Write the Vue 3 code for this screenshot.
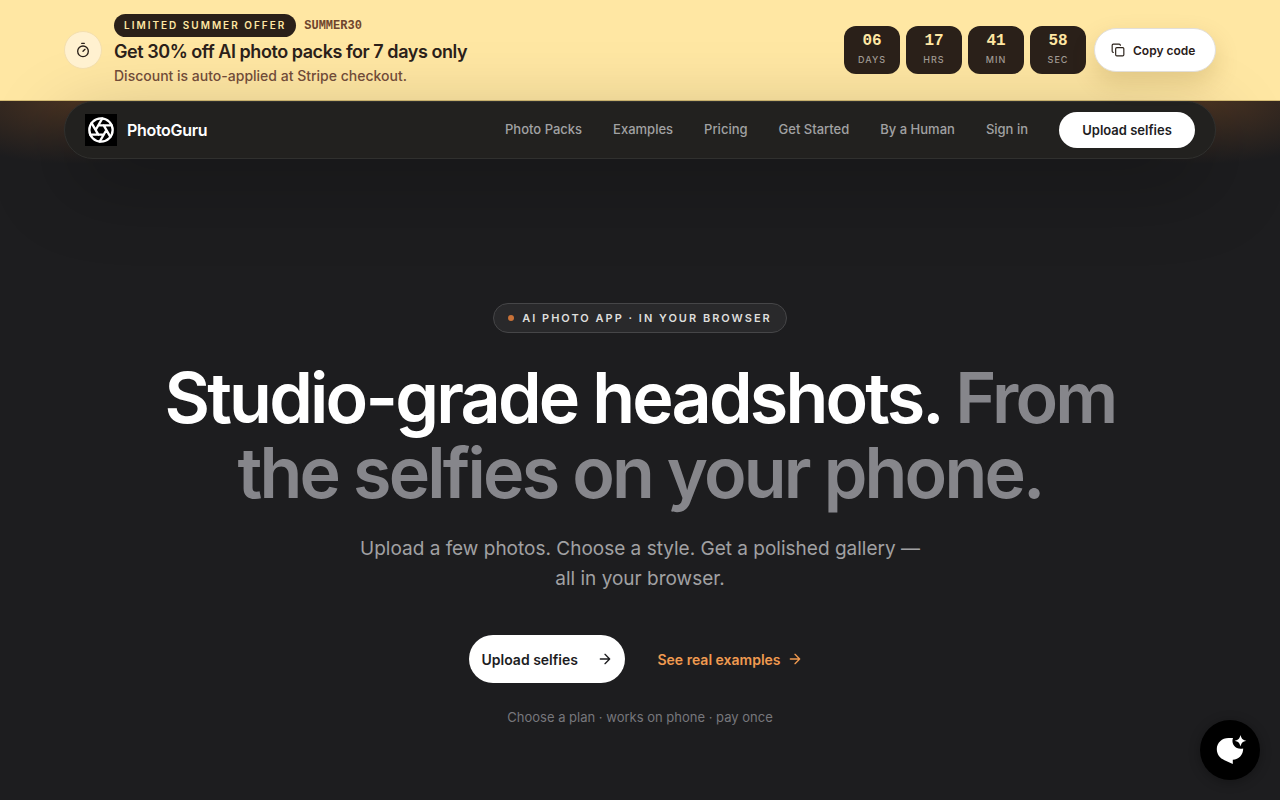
<script setup>
import { ref } from 'vue';

const promoCode = 'SUMMER30';
const copied = ref(false);

const countdown = [
  { value: '06', unit: 'Days' },
  { value: '17', unit: 'Hrs' },
  { value: '41', unit: 'Min' },
  { value: '58', unit: 'Sec' },
];

const links = [
  { label: 'Photo Packs', href: '#packs' },
  { label: 'Examples', href: '#examples' },
  { label: 'Pricing', href: '#pricing' },
  { label: 'Get Started', href: '#start' },
  { label: 'By a Human', href: '#human' },
  { label: 'Sign in', href: '#sign-in' },
];

async function copyCode() {
  await navigator.clipboard.writeText(promoCode);
  copied.value = true;
}
</script>

<template>
  <div class="page">
    <aside class="banner" aria-label="Limited summer offer">
      <div class="container banner-inner">
        <span class="timer-badge">
          <svg class="icon" viewBox="0 0 24 24" aria-hidden="true">
            <path d="M10 2h4M12 14l3-3" />
            <circle cx="12" cy="14" r="8" />
          </svg>
        </span>
        <div class="offer">
          <div class="offer-tags">
            <span class="offer-pill">Limited summer offer</span>
            <span class="offer-code">{{ promoCode }}</span>
          </div>
          <div class="offer-title">Get 30% off AI photo packs for 7 days only</div>
          <div class="offer-note">Discount is auto-applied at Stripe checkout.</div>
        </div>
        <div class="banner-actions">
          <div class="countdown">
            <div v-for="item in countdown" :key="item.unit" class="tick">
              <span class="tick-value">{{ item.value }}</span>
              <span class="tick-unit">{{ item.unit }}</span>
            </div>
          </div>
          <button type="button" class="copy-button" @click="copyCode">
            <svg class="icon" viewBox="0 0 24 24" aria-hidden="true">
              <rect x="8" y="8" width="14" height="14" rx="2" />
              <path d="M4 16c-1.1 0-2-.9-2-2V4c0-1.1.9-2 2-2h10c1.1 0 2 .9 2 2" />
            </svg>
            {{ copied ? 'Copied' : 'Copy code' }}
          </button>
        </div>
      </div>
    </aside>

    <header class="container">
      <nav class="nav">
        <a class="brand" href="#">
          <span class="brand-mark">
            <svg class="icon" viewBox="0 0 24 24" aria-hidden="true">
              <circle cx="12" cy="12" r="10" />
              <path
                d="m14.31 8 5.74 9.94M9.69 8h11.48M7.38 12l5.74-9.94M9.69 16 3.95 6.06M14.31 16H2.83M16.62 12l-5.74 9.94" />
            </svg>
          </span>
          PhotoGuru
        </a>
        <div class="nav-links">
          <a
            v-for="link in links"
            :key="link.label"
            class="nav-link"
            :href="link.href">
            {{ link.label }}
          </a>
          <a class="nav-cta" href="#upload">Upload selfies</a>
        </div>
      </nav>
    </header>

    <main class="hero">
      <div class="eyebrow">
        <span class="dot"></span>
        AI photo app · In your browser
      </div>
      <h1 class="headline">
        Studio-grade headshots.
        <span class="muted">From the selfies on your phone.</span>
      </h1>
      <p class="lead">
        Upload a few photos. Choose a style. Get a polished gallery — all in
        your browser.
      </p>
      <div class="actions">
        <a class="primary" href="#upload">
          Upload selfies
          <svg class="icon" viewBox="0 0 24 24" aria-hidden="true">
            <path d="M5 12h14M12 5l7 7-7 7" />
          </svg>
        </a>
        <a class="secondary" href="#examples">
          See real examples
          <svg class="icon" viewBox="0 0 24 24" aria-hidden="true">
            <path d="M5 12h14M12 5l7 7-7 7" />
          </svg>
        </a>
      </div>
      <p class="fineprint">Choose a plan · works on phone · pay once</p>
    </main>

    <button type="button" class="chat" aria-label="Open chat">
      <svg viewBox="0 0 32 32" aria-hidden="true">
        <path
          d="M19 4H14.500C8 4 2.800 8.800 2.800 15c0 5.500 3.200 9.200 7.700 11.200L18.800 30v-4.200c6-.3 10.400-5 10.400-11.300-6.500 1.800-12.700-4-10.200-10.500z" />
        <path d="M26.500 1c1 3.800 2 4.800 5.800 5.800-3.800 1-4.800 2-5.800 5.800-1-3.800-2-4.800-5.800-5.800 3.800-1 4.800-2 5.800-5.800z" />
      </svg>
    </button>
  </div>
</template>

<style>
body {
  background: #1d1d1f;
}
</style>

<style scoped>
.page {
  min-height: 100vh;
  background:
    radial-gradient(ellipse 160px 64px at 6% 100px, #4a3322 0%, transparent 100%),
    radial-gradient(ellipse 160px 64px at 94% 100px, #4a3322 0%, transparent 100%),
    #1d1d1f;
  color: #fff;
  font-family: Inter, 'Liberation Sans', sans-serif;
  overflow: hidden;
}

a {
  color: inherit;
  text-decoration: none;
}

button {
  border: 0;
  font-family: inherit;
  cursor: pointer;
}

.icon {
  width: 16px;
  height: 16px;
  flex: none;
  fill: none;
  stroke: currentColor;
  stroke-width: 2;
  stroke-linecap: round;
  stroke-linejoin: round;
}

.container {
  max-width: 1152px;
  margin: 0 auto;
  padding: 0 24px;
}

.banner {
  background: #ffe7a3;
  border-bottom: 1px solid #d6bd75;
  color: #2a2019;
}

.banner-inner {
  display: flex;
  align-items: center;
  gap: 12px;
  min-height: 72px;
  padding-top: 14px;
  padding-bottom: 14px;
}

.timer-badge {
  display: grid;
  place-items: center;
  width: 36px;
  height: 36px;
  border: 1px solid #f4dfae;
  border-radius: 50%;
  background: #fff1d0;
}

.offer-tags {
  display: flex;
  align-items: center;
  gap: 8px;
}

.offer-pill {
  padding: 0 10px;
  border-radius: 12px;
  background: #2a2019;
  color: #ffe7a3;
  font-size: 10px;
  font-weight: 600;
  letter-spacing: 2px;
  line-height: 23px;
  text-transform: uppercase;
}

.offer-code {
  color: #6f452d;
  font-family: 'Liberation Mono', monospace;
  font-size: 12px;
  font-weight: 700;
}

.offer-title {
  margin-top: 2px;
  font-size: 18px;
  font-weight: 600;
  letter-spacing: -0.025em;
  line-height: 25px;
}

.offer-note {
  margin-top: 2px;
  color: #704b38;
  font-size: 14px;
  font-weight: 500;
  line-height: 20px;
}

.banner-actions,
.countdown {
  display: flex;
  align-items: center;
}

.banner-actions {
  gap: 8px;
  margin-left: auto;
}

.countdown {
  gap: 6px;
}

.tick {
  display: flex;
  flex-direction: column;
  align-items: center;
  width: 56px;
  height: 48px;
  border-radius: 12px;
  background: #2a2019;
}

.tick-value {
  color: #ffe7a3;
  font-family: 'Liberation Mono', monospace;
  font-size: 16px;
  font-weight: 700;
  line-height: 30px;
}

.tick-unit {
  color: #a09a93;
  font-size: 9px;
  font-weight: 500;
  letter-spacing: 1px;
  line-height: 8px;
  text-transform: uppercase;
}

.copy-button {
  display: flex;
  align-items: center;
  gap: 8px;
  min-width: 122px;
  height: 44px;
  padding: 0 16px;
  border: 1px solid #e2dfda;
  border-radius: 22px;
  background: #fff;
  box-shadow: 0 10px 24px rgba(110, 80, 10, 0.18);
  color: #2a2019;
  font-size: 12px;
  font-weight: 600;
}

.copy-button .icon {
  width: 14px;
  height: 14px;
}

.nav {
  display: flex;
  align-items: center;
  justify-content: space-between;
  height: 56px;
  padding: 0 20px;
  border: 1px solid #30302e;
  border-radius: 29px;
  background: #22211f;
  box-shadow: 0 24px 80px rgba(0, 0, 0, 0.28);
}

.brand {
  display: flex;
  align-items: center;
  gap: 10px;
  font-size: 16px;
  font-weight: 600;
  letter-spacing: -0.02em;
}

.brand-mark {
  display: grid;
  place-items: center;
  width: 32px;
  height: 32px;
  background: #000;
}

.brand-mark .icon {
  width: 28px;
  height: 28px;
}

.nav-links {
  display: flex;
  align-items: center;
  gap: 31px;
  font-size: 13px;
}

.nav-link {
  padding-bottom: 2px;
  color: #a1a1a3;
  font-weight: 500;
}

.nav-cta {
  min-width: 136px;
  border-radius: 18px;
  background: #fff;
  color: #1d1d1f;
  font-weight: 600;
  line-height: 36px;
  text-align: center;
}

.hero {
  display: flex;
  flex-direction: column;
  align-items: center;
  padding: 144px 24px 72px;
  text-align: center;
}

.eyebrow {
  display: flex;
  align-items: center;
  gap: 8px;
  padding: 0 14px;
  border: 1px solid #464648;
  border-radius: 15px;
  background: #29292b;
  color: #dededc;
  font-size: 11px;
  font-weight: 600;
  letter-spacing: 2px;
  line-height: 28px;
  text-transform: uppercase;
}

.dot {
  width: 6px;
  height: 6px;
  border-radius: 50%;
  background: #c97238;
}

.headline {
  max-width: 1024px;
  margin: 27px 0 0;
  font-size: 70px;
  font-weight: 600;
  letter-spacing: -0.04em;
  line-height: 75px;
}

.muted {
  color: #86868b;
}

.lead {
  max-width: 576px;
  margin: 24px 0 0;
  color: #a1a1a3;
  font-size: 19px;
  line-height: 30px;
}

.actions {
  display: flex;
  align-items: center;
  gap: 32px;
  margin-top: 41px;
  font-size: 14px;
  font-weight: 600;
}

.primary,
.secondary {
  display: flex;
  align-items: center;
}

.primary {
  justify-content: space-between;
  min-width: 132px;
  height: 48px;
  padding: 0 12px;
  border-radius: 24px;
  background: #fff;
  color: #1d1d1f;
}

.secondary {
  gap: 6px;
  padding-right: 8px;
  color: #f09a50;
}

.fineprint {
  margin: 24px 0 0;
  color: #77777c;
  font-size: 13px;
  line-height: 20px;
}

.chat {
  position: fixed;
  right: 20px;
  bottom: 20px;
  display: grid;
  place-items: center;
  width: 60px;
  height: 60px;
  padding: 0;
  border-radius: 50%;
  background: #000;
  box-shadow: 0 2px 12px rgba(0, 0, 0, 0.3);
}

.chat svg {
  width: 32px;
  height: 32px;
  fill: #fff;
  overflow: visible;
}
</style>
